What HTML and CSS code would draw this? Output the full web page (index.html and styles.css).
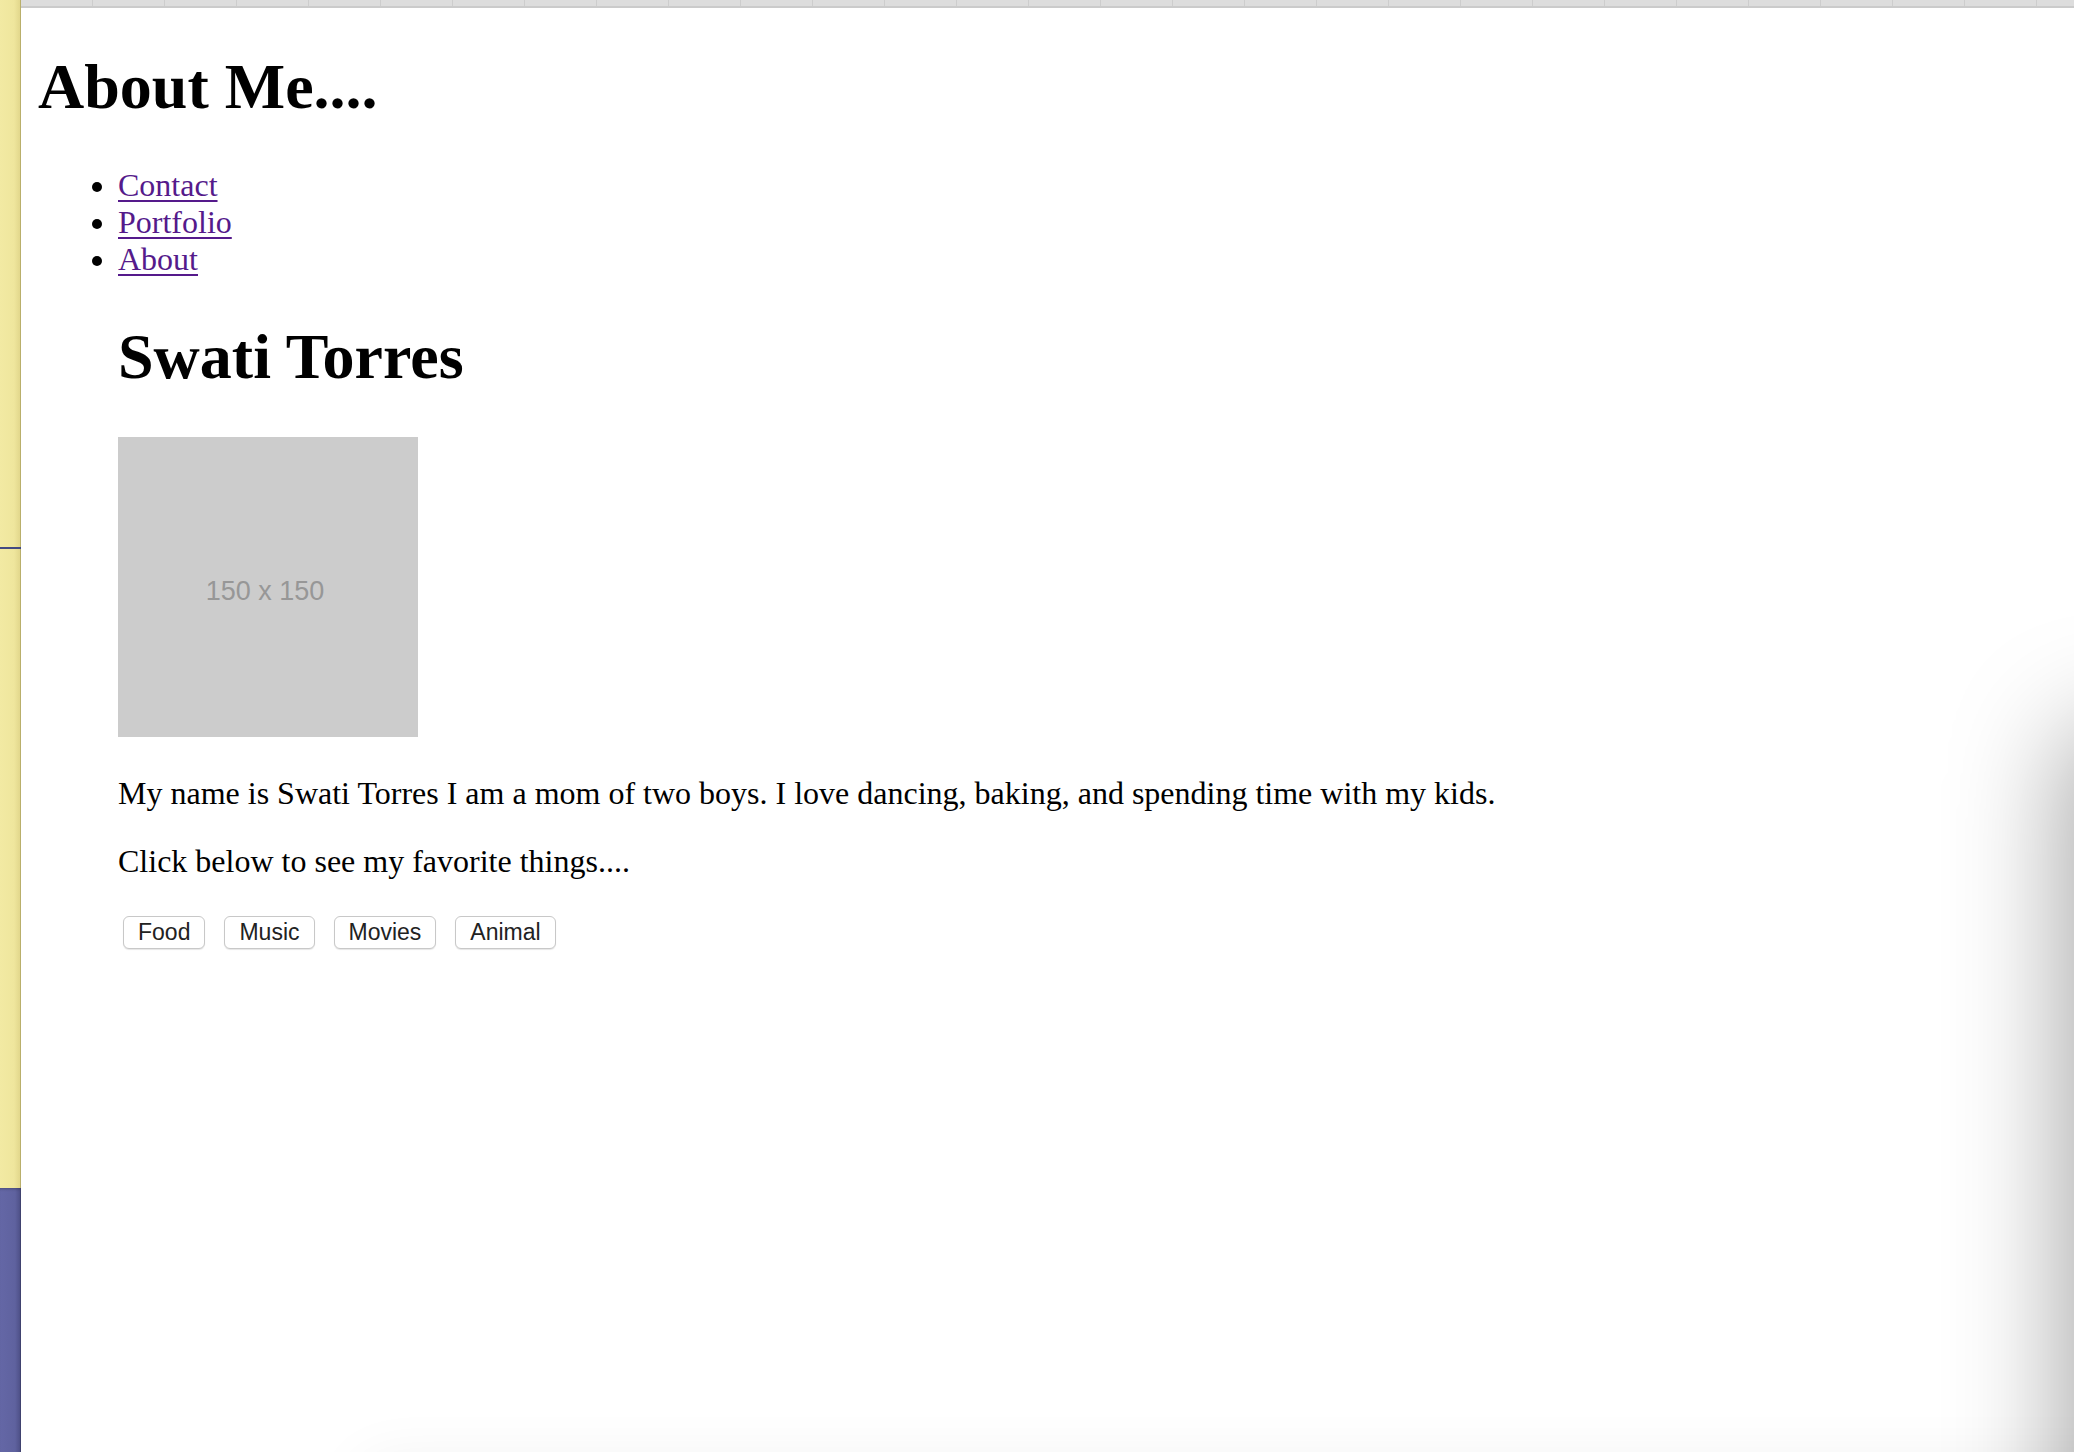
FILE: index.html
```html
<!DOCTYPE html>
<html lang="en">
<head>
<meta charset="utf-8">
<title>About Me</title>
<link rel="stylesheet" href="styles.css">
</head>
<body>
<div class="screen">
  <div class="strip">
    <div class="strip-yellow">
      <div class="strip-line"></div>
    </div>
    <div class="strip-purple"></div>
  </div>
  <div class="window">
    <div class="tabbar"></div>
    <div class="page">
      <h1 class="title">About Me....</h1>
      <ul class="nav">
        <li><a href="#contact">Contact</a></li>
        <li><a href="#portfolio">Portfolio</a></li>
        <li><a href="#about">About</a></li>
      </ul>
      <div class="profile">
        <h1 class="title">Swati Torres</h1>
        <p class="photo">
          <svg width="300" height="300" viewBox="0 0 300 300">
            <rect width="300" height="300" fill="#cccccc"/>
            <text x="147" y="163" text-anchor="middle" font-family="Liberation Sans, Arial, sans-serif" font-size="27" fill="#979797">150 x 150</text>
          </svg>
        </p>
        <p class="text">My name is Swati Torres I am a mom of two boys. I love dancing, baking, and spending time with my kids.</p>
        <p class="text">Click below to see my favorite things....</p>
        <div class="buttons">
          <button class="btn">Food</button>
          <button class="btn">Music</button>
          <button class="btn">Movies</button>
          <button class="btn">Animal</button>
        </div>
      </div>
    </div>
  </div>
  <div class="shadow-right"></div>
  <div class="shadow-bottom"></div>
</div>
</body>
</html>
```
FILE: styles.css
```css
html, body {
  margin: 0;
  padding: 0;
  background: #ffffff;
}

.screen {
  position: relative;
  display: flex;
  width: 2074px;
  height: 1452px;
  overflow: hidden;
  font-family: "Liberation Serif", "Times New Roman", serif;
  color: #000;
}

.strip {
  width: 21px;
  flex: none;
  display: flex;
  flex-direction: column;
}

.strip-yellow {
  flex: 1;
  background: linear-gradient(to right, #f2eaa3 0, #efe69d 70%, #e2d78c 100%);
  border-right: 1px solid #b9af6b;
  display: flex;
  flex-direction: column;
  padding-top: 547px;
}

.strip-line {
  height: 2px;
  background: #434a82;
  margin-right: -1px;
}

.strip-purple {
  height: 264px;
  background: linear-gradient(to right, #6467a6 0, #5f629f 75%, #4f5189 100%);
  border-right: 1px solid #40426f;
  box-shadow: inset 0 3px 3px -2px rgba(0,0,0,0.25);
}

.window {
  flex: 1;
  display: flex;
  flex-direction: column;
  min-width: 0;
}

.tabbar {
  height: 6px;
  flex: none;
  background-color: #dddddd;
  background-image: repeating-linear-gradient(to right, transparent 0, transparent 71px, #cdcdcd 71px, #cdcdcd 72px);
  border-bottom: 2px solid #cbcbcb;
}

.page {
  padding: 0 17px;
}

.title {
  font-size: 64px;
  font-weight: bold;
  margin: 42px 0 44px;
  line-height: 73px;
}

.nav {
  margin: 0;
  padding-left: 80px;
  font-size: 32px;
  line-height: 37px;
}

.nav a {
  color: #551a8b;
  text-decoration-thickness: 2px;
  text-underline-offset: 4px;
}

.profile {
  padding-left: 80px;
}

.photo {
  margin: 0;
  padding-bottom: 6px;
  font-size: 32px;
  line-height: 36px;
}

.photo svg {
  display: block;
}

.text {
  font-size: 32px;
  line-height: 36px;
  margin: 32px 0;
}

.buttons {
  display: flex;
  gap: 19px;
  margin-top: 37px;
  padding-left: 5px;
}

.btn {
  height: 33px;
  padding: 0 14px;
  background: #ffffff;
  border: 1px solid #c8c8c8;
  border-radius: 6px;
  box-shadow: 0 1px 1px rgba(0,0,0,0.10);
  font-family: "Liberation Sans", Arial, sans-serif;
  font-size: 23px;
  color: #222222;
  line-height: 31px;
}

.shadow-right {
  position: absolute;
  left: 2074px;
  top: 740px;
  width: 400px;
  height: 1200px;
  border-radius: 20px;
  box-shadow: 0 0 110px 12px rgba(0,0,0,0.34);
  background: #eee;
}

.shadow-bottom {
  position: absolute;
  left: 360px;
  top: 1460px;
  width: 1900px;
  height: 400px;
  border-radius: 20px;
  box-shadow: 0 0 60px rgba(0,0,0,0.06);
}
```
